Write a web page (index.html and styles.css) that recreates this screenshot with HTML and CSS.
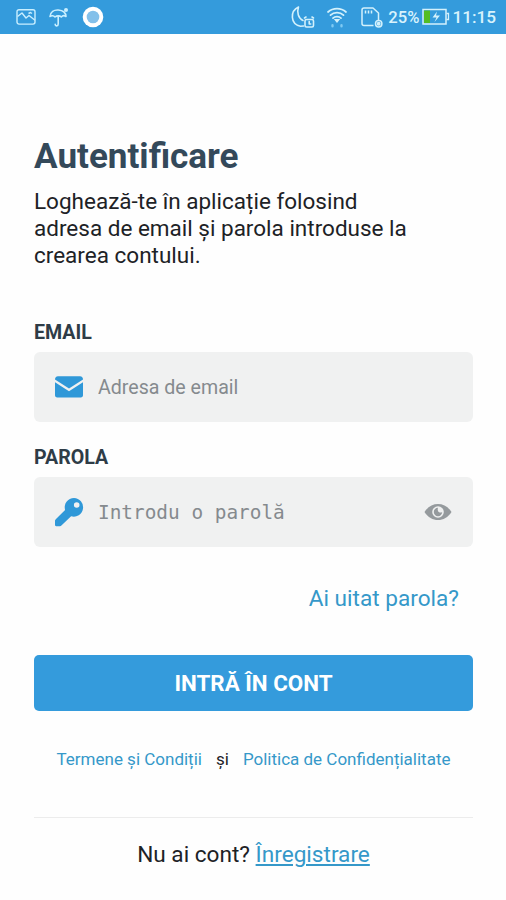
FILE: index.html
```html
<!DOCTYPE html>
<html lang="ro">
<head>
    <meta charset="UTF-8">
    <meta name="viewport" content="width=device-width, initial-scale=1.0">
    <title>Autentificare</title>
    <link rel="stylesheet" href="styles.css">
</head>
<body>
    <div class="status-bar">
        <div class="status-left">
            <svg width="20" height="18" viewBox="0 0 20 18" fill="none" stroke="#c9efff" stroke-width="1.4" stroke-linejoin="round">
                <rect x="1" y="1.7" width="18" height="14.4" rx="2"/>
                <path d="M1.5 8.5L6 5l4 5 3-2.5 6 4.8M12.5 5.5l2-1 1.5 1"/>
            </svg>
            <svg width="20" height="20" viewBox="0 0 20 20" fill="none" stroke="#c9efff" stroke-width="1.6" stroke-linecap="round" stroke-linejoin="round">
                <path d="M1 9.5C1.5 5 5 2.7 9.3 3c4.5.3 7.5 2.7 7.7 6.5-1.7-1.3-3.5-1-4.7.5-1.5-1.5-4.5-1.5-6.300 0-1.300-1.500-3.500-1.800-5-.5z"/>
                <path d="M9.200 9.500V17c0 2.500-3 2.500-3 .3"/>
                <circle cx="17" cy="3" r="2" fill="#c9efff" stroke="none"/>
            </svg>
            <svg width="22" height="22" viewBox="0 0 22 22">
                <circle cx="11" cy="11" r="10.3" fill="#fff"/>
                <circle cx="11" cy="11" r="6.3" fill="#83c0ea"/>
            </svg>
        </div>
        <div class="status-right">
            <svg class="moon" width="24" height="24" viewBox="0 0 24 24" fill="none" stroke="#d3f1fc" stroke-width="1.6" stroke-linejoin="round" stroke-linecap="round">
                <path d="M7.5 2C-1 6-1 19 9.500 21.300l3-.3M7.500 2C5.500 7.500 7.500 13.500 12 15.500"/>
                <rect x="14" y="14.500" width="8.500" height="7.500" rx="1.500"/>
                <path d="M18.200 16.500v2.500h1.500M13.500 13l1.500-1M22.500 13l-1.500-1"/>
            </svg>
            <svg class="wifi" width="20" height="21" viewBox="0 0 20 21" fill="none" stroke="#d3f1fc" stroke-width="1.7" stroke-linecap="round">
                <path d="M1 5c5-4.500 13-4.500 18 0M3.500 8.200c3.500-3.500 9.500-3.500 13 0M6 11.200c2-2 6-2 8 0"/>
                <path d="M6.800 12h6.400L10 16z" fill="#d3f1fc" stroke="none"/>
                <path d="M5.500 18.300v1M14.500 18.300v1" stroke="#7fcaf3" stroke-width="2.4"/>
            </svg>
            <svg class="sim" width="23" height="23" viewBox="0 0 23 23" fill="none" stroke="#d3f1fc" stroke-width="1.5" stroke-linejoin="round">
                <path d="M12.500 19.500H3c-1.200 0-2-.8-2-2V4c0-1.200.8-2 2-2h9l5.500 5v7"/>
                <path d="M4.500 4.500v3M7.500 4.500v3M10.500 4.500v3"/>
                <circle cx="17.700" cy="17.700" r="3.200"/>
                <circle cx="17.700" cy="17.700" r="1.200" fill="#d3f1fc"/>
            </svg>
            <span class="percent">25%</span>
            <svg class="battery" width="28" height="18" viewBox="0 0 28 18">
                <rect x="1" y="1.500" width="23" height="14.500" fill="none" stroke="#d3f1fc" stroke-width="1.5"/>
                <rect x="2" y="2.500" width="6" height="12.500" fill="#54bd23"/>
                <path d="M24.500 5.500h2v6h-2" fill="none" stroke="#d3f1fc" stroke-width="1.3"/>
                <path d="M15 3.500L10.500 9.500h4L12.500 14l5.500-6.500h-4z" fill="#d3f1fc"/>
            </svg>
            <span class="time">11:15</span>
        </div>
    </div>

    <div class="container">
        <h1>Autentificare</h1>
        <p class="intro">Loghează-te în aplicație folosind<br>adresa de email și parola introduse la<br>crearea contului.</p>

        <form>
            <label for="email">EMAIL</label>
            <div class="input-group">
                <svg class="field-icon" width="30" height="30" viewBox="0 0 30 30" fill="#2f98d8">
                    <path d="M1 7.5C1 5.5 2 4.2 4 4.2h22c2 0 3 1.3 3 3.3L15 16.4z"/>
                    <path d="M1 10.3l14 9 14-9v13c0 1.3-.9 2.2-2.2 2.2H3.2C1.9 25.5 1 24.6 1 23.300z"/>
                </svg>
                <input type="text" id="email" placeholder="Adresa de email">
            </div>

            <label for="password">PAROLA</label>
            <div class="input-group">
                <svg class="field-icon" width="30" height="30" viewBox="0 0 30 30" fill="#2f98d8">
                    <path fill-rule="evenodd" d="M20 1a9.300 9.300 0 0 0-8.900 12L1.600 22.500c-.4.400-.6.800-.6 1.300v4.200c0 .7.500 1.200 1.200 1.200h3.800c.6 0 1-.2 1.400-.6l9.700-9.400A9.300 9.300 0 1 0 20 1zm2.700 4.200a2.800 2.800 0 1 1 0 5.600 2.800 2.800 0 0 1 0-5.600z"/>
                </svg>
                <input type="password" id="password" class="mono" placeholder="Introdu o parolă">
                <svg width="28" height="18" viewBox="0 0 28 18">
                    <path d="M.5 9C4 3.500 8.800 1 14 1s10 2.500 13.500 8C24 14.500 19.200 17 14 17S4 14.500.5 9z" fill="#959a9d"/>
                    <circle cx="14" cy="9" r="5.800" fill="#eff0f0"/>
                    <path d="M14 4.800A4.200 4.200 0 1 0 18.200 9c-1 .8-2.400.8-3.300.1-1-.8-1.500-2.400-.9-4.300z" fill="#959a9d"/>
                </svg>
            </div>

            <a class="forgot" href="#">Ai uitat parola?</a>
            <button type="button">INTRĂ ÎN CONT</button>
        </form>

        <div class="terms">
            <a href="#">Termene și Condiții</a>
            <span>și</span>
            <a href="#">Politica de Confidențialitate</a>
        </div>

        <div class="register">Nu ai cont? <a href="#">Înregistrare</a></div>
    </div>
</body>
</html>
```
FILE: styles.css
```css
* {
    box-sizing: border-box;
}

body {
    margin: 0;
    font-family: Roboto, sans-serif;
    background-color: #fefefe;
    color: #1d2226;
}

a {
    color: #3598c9;
    text-decoration: none;
}

svg {
    display: block;
    flex-shrink: 0;
}

.status-bar {
    height: 34px;
    padding: 0 10px 0 16px;
    background-color: #349bdc;
    color: #d9f3fc;
    display: flex;
    justify-content: space-between;
    align-items: center;
}

.status-left,
.status-right {
    display: flex;
    align-items: center;
}

.status-left {
    gap: 13px;
}

.status-right {
    font-size: 17.2px;
    font-weight: 500;
}

.moon {
    margin-right: 12px;
}

.wifi {
    margin-right: 14px;
}

.sim {
    margin-right: 4px;
}

.percent {
    font-size: 16.6px;
}

.battery {
    margin: 0 2px 0 3px;
}

.container {
    padding: 100px 33px 0 34px;
}

h1 {
    margin: 0;
    font-size: 35.1px;
    line-height: 44px;
    font-weight: bold;
    color: #34495a;
}

.intro {
    margin: 10px 0 52px;
    font-size: 22.5px;
    line-height: 27px;
}

label {
    display: block;
    margin-bottom: 7px;
    font-size: 19.6px;
    line-height: 24px;
    font-weight: bold;
    color: #2e3c47;
}

.input-group {
    height: 70px;
    margin-bottom: 24px;
    padding: 0 21px 0 20px;
    border-radius: 6px;
    background-color: #f0f1f1;
    display: flex;
    align-items: center;
}

.field-icon {
    margin-right: 14px;
}

input {
    flex: 1;
    min-width: 0;
    padding: 0;
    border: none;
    outline: none;
    background: none;
    font-family: Roboto, sans-serif;
    font-size: 19.6px;
}

input::placeholder {
    color: #858a8e;
}

.mono {
    font-family: "DejaVu Sans Mono", monospace;
    font-size: 19.4px;
}

.forgot {
    display: block;
    margin: 37px 14px 42px 0;
    font-size: 22.6px;
    line-height: 29px;
    text-align: right;
}

button {
    display: block;
    width: 100%;
    height: 56px;
    padding: 0;
    border: none;
    border-radius: 5px;
    background-color: #349bdc;
    color: white;
    font-family: Roboto, sans-serif;
    font-size: 22.4px;
    font-weight: bold;
}

.terms {
    height: 107px;
    padding-top: 36px;
    border-bottom: 1px solid #ececec;
    display: flex;
    justify-content: center;
    gap: 14px;
    font-size: 17px;
    line-height: 24px;
}

.register {
    padding-top: 22px;
    font-size: 22.6px;
    line-height: 30px;
    text-align: center;
}

.register a {
    text-decoration: underline;
}
```
